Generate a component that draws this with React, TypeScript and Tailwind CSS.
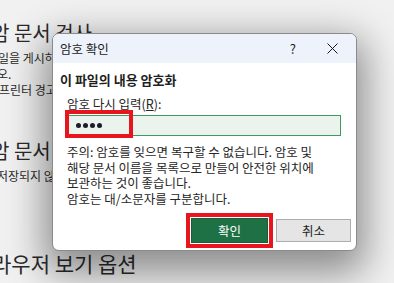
import React from "react";

const font = { fontFamily: '"Noto Sans CJK KR", "Noto Sans", sans-serif' };

export default function App() {
  return (
    <div
      className="relative w-[394px] h-[283px] overflow-hidden bg-[#f1f1f1] text-[#2a2a2a]"
      style={font}
    >
      {/* background page content */}
      <div className="flex flex-col">
        <div className="mt-[20px] ml-[-9px] text-[20px] leading-[26px] whitespace-nowrap">암 문서 검사</div>
        <div className="mt-[4px] ml-[-2px] text-[12px] leading-[16px] whitespace-nowrap">일을 게시하</div>
        <div className="ml-[-3px] text-[12px] leading-[16px] whitespace-nowrap">오.</div>
        <div className="ml-[-1px] text-[12px] leading-[16px] whitespace-nowrap">프린터 경고</div>
        <div className="mt-[40px] ml-[-9px] text-[20px] leading-[26px] whitespace-nowrap">암 문서</div>
        <div className="mt-[4px] ml-[-3px] text-[12px] leading-[16px] whitespace-nowrap">저장되지 않</div>
        <div className="mt-[66px] ml-[-8px] text-[21px] leading-[26px] whitespace-nowrap">라우저 보기 옵션</div>
      </div>

      {/* dialog */}
      <div className="absolute left-[52px] top-[33px] w-[305px] h-[218px] flex flex-col bg-white border border-[#8a8a8a] rounded-[7px] overflow-hidden shadow-[0_14px_38px_8px_rgba(0,0,0,0.42)]">
        <div className="h-[29px] shrink-0 flex items-center bg-[#eef2fa] text-[#1a1a1a]">
          <span className="ml-[7px] text-[12.5px] leading-[16px]">암호 확인</span>
          <span className="ml-auto mr-[31px] text-[13px] leading-[16px]">?</span>
          <svg width="11" height="11" viewBox="0 0 11 11" className="mr-[18px]">
            <path d="M0.5 0.5 L10.5 10.5 M10.5 0.5 L0.5 10.5" stroke="#1a1a1a" strokeWidth="1" fill="none" />
          </svg>
        </div>

        <div className="mt-[9px] ml-[7px] text-[13px] leading-[16px] font-semibold text-[#1f1f1f] whitespace-nowrap">
          이 파일의 내용 암호화
        </div>
        <div className="mt-[8px] ml-[14px] text-[12.5px] leading-[16px] text-[#262626] whitespace-nowrap">
          암호 다시 입력(<span className="underline">R</span>):
        </div>
        <div className="relative mt-[3px] ml-[15px] w-[273px] h-[21px] shrink-0 flex items-center gap-[2px] pl-[7px] bg-[#eaf3ec] border border-[#3f9a5f]">
          <span className="w-[5px] h-[5px] rounded-full bg-[#1c1c2a]" />
          <span className="w-[5px] h-[5px] rounded-full bg-[#1c1c2a]" />
          <span className="w-[5px] h-[5px] rounded-full bg-[#1c1c2a]" />
          <span className="w-[5px] h-[5px] rounded-full bg-[#1c1c2a]" />
          <div className="absolute left-[-4px] top-[-6px] w-[68px] h-[28px] border-[4px] border-[#e8141e]" />
        </div>

        <div className="mt-[8px] ml-[14px] text-[12.5px] leading-[15.5px] text-[#262626] whitespace-nowrap">
          주의: 암호를 잊으면 복구할 수 없습니다. 암호 및
          <br />
          해당 문서 이름을 목록으로 만들어 안전한 위치에
          <br />
          보관하는 것이 좋습니다.
          <br />
          암호는 대/소문자를 구분합니다.
        </div>

        <div className="mt-[7px] flex items-center justify-end pr-[5px]">
          <div className="border-[4px] border-[#e8141e] p-[1px] bg-white">
            <div className="w-[77px] h-[25px] flex items-center justify-center bg-[#1e7145] border border-[#185e39] text-white text-[12.5px] leading-[16px]">
              확인
            </div>
          </div>
          <div className="ml-[3px] w-[75px] h-[23px] flex items-center justify-center bg-[#e5e5e5] border border-[#adadad] text-[#1f1f1f] text-[12.5px] leading-[16px]">
            취소
          </div>
        </div>
      </div>
    </div>
  );
}
